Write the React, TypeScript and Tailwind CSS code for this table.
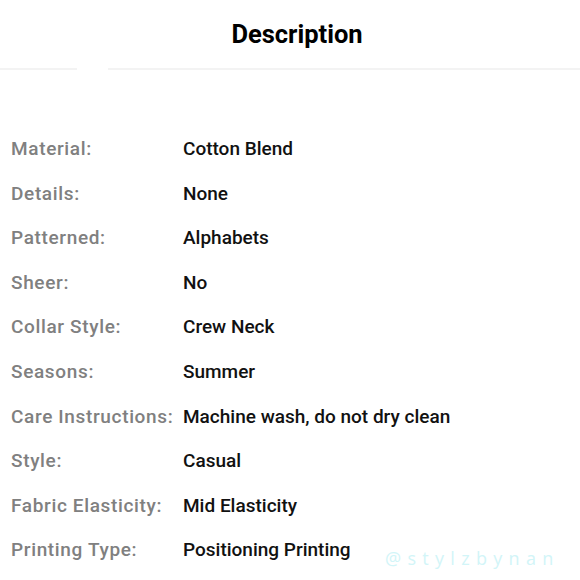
const rows: [string, string][] = [
  ['Material:', 'Cotton Blend'],
  ['Details:', 'None'],
  ['Patterned:', 'Alphabets'],
  ['Sheer:', 'No'],
  ['Collar Style:', 'Crew Neck'],
  ['Seasons:', 'Summer'],
  ['Care Instructions:', 'Machine wash, do not dry clean'],
  ['Style:', 'Casual'],
  ['Fabric Elasticity:', 'Mid Elasticity'],
  ['Printing Type:', 'Positioning Printing'],
];

export default function App() {
  return (
    <div className="relative h-[580px] w-[580px] overflow-hidden bg-white font-['Roboto',sans-serif]">
      <div className="flex h-[68px] items-center justify-center pl-[14px]">
        <h1 className="text-[25.5px] font-bold text-black">Description</h1>
      </div>
      <div className="flex h-[2px]">
        <div className="w-[77px] bg-[#f3f3f3]" />
        <div className="w-[31px]" />
        <div className="flex-1 bg-[#f3f3f3]" />
      </div>
      <div className="flex flex-col pt-[57px]">
        {rows.map(([label, value]) => (
          <div key={label} className="flex h-[44.6px] items-baseline text-[19px] font-medium leading-[44.6px]">
            <span className="w-[183px] pl-[11px] tracking-[0.65px] text-[#808080]">{label}</span>
            <span className="text-[#111]">{value}</span>
          </div>
        ))}
      </div>
      <div className="absolute left-[385px] top-[545px] text-[18px] tracking-[0.35em] text-[#d2f5f8] font-['Open_Sans',sans-serif]">
        @stylzbynan
      </div>
    </div>
  );
}
